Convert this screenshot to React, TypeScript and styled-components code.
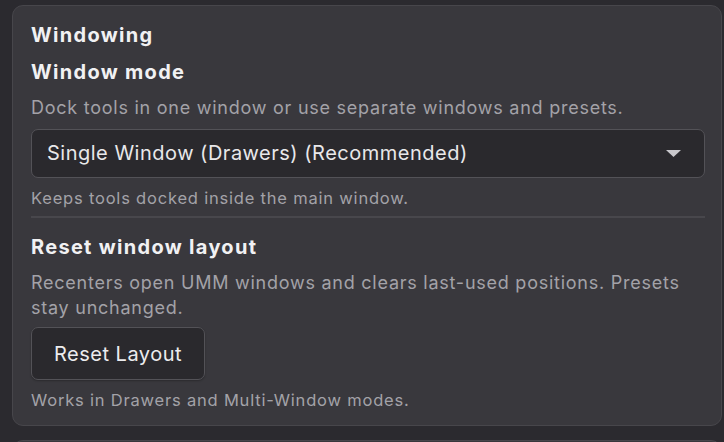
import React from "react";
import styled, { createGlobalStyle } from "styled-components";

const Global = createGlobalStyle`
  html, body {
    margin: 0;
    padding: 0;
    background: #2b2a2f;
    overflow: hidden;
  }
  body {
    font-family: Inter, "Noto Sans", "Liberation Sans", sans-serif;
    color: #ececee;
    -webkit-font-smoothing: antialiased;
  }
`;

const Page = styled.div`
  display: flex;
  flex-direction: column;
  gap: 14px;
  padding: 5px 2px 0 12px;
  height: 442px;
  box-sizing: border-box;
  overflow: hidden;
`;

const Card = styled.section`
  flex-shrink: 0;
  background: #39383d;
  border: 1px solid #47464b;
  border-radius: 11px;
  padding: 16px 16px 14px 18px;
  display: flex;
  flex-direction: column;
`;

const SectionTitle = styled.h2`
  margin: 0 0 11px;
  font-size: 20px;
  line-height: 26px;
  font-weight: 700;
  letter-spacing: 1.3px;
  color: #f1f1f3;
`;

const SettingTitle = styled.h3`
  margin: 0;
  font-size: 20px;
  line-height: 26px;
  font-weight: 700;
  letter-spacing: 1.3px;
  color: #f1f1f3;
`;

const Description = styled.p`
  margin: 10px 0 0;
  font-size: 18px;
  line-height: 25.7px;
  letter-spacing: 0.75px;
  color: #a3a2a8;
`;

const Hint = styled.p`
  margin: 9px 0 0;
  font-size: 16.5px;
  line-height: 22px;
  letter-spacing: 0.8px;
  color: #a3a2a8;
`;

const SelectBox = styled.div`
  margin-top: 8px;
  height: 49px;
  box-sizing: border-box;
  display: flex;
  align-items: center;
  justify-content: space-between;
  padding: 0 23px 0 15px;
  background: #2a292d;
  border: 1px solid #535257;
  border-radius: 7px;
  font-size: 20px;
  letter-spacing: 0.5px;
  color: #e8e8ea;
`;

const Caret = styled.svg`
  width: 15px;
  height: 7px;
  display: block;
`;

const Divider = styled.hr`
  margin: 7px 0 16px;
  border: none;
  height: 2px;
  background: #48474c;
`;

const Button = styled.button`
  margin-top: 6px;
  align-self: flex-start;
  height: 53px;
  box-sizing: border-box;
  padding: 0 22px;
  background: #2a292d;
  border: 1px solid #535257;
  border-radius: 7px;
  font-family: inherit;
  font-size: 20px;
  letter-spacing: 0.5px;
  color: #ececee;
  box-shadow: 0 1px 2px rgba(0, 0, 0, 0.25);
`;

const NextCard = styled(Card)`
  height: 40px;
  padding: 0;
`;

export default function App() {
  return (
    <>
      <Global />
      <Page>
        <Card>
          <SectionTitle>Windowing</SectionTitle>
          <SettingTitle>Window mode</SettingTitle>
          <Description>Dock tools in one window or use separate windows and presets.</Description>
          <SelectBox>
            <span>Single Window (Drawers) (Recommended)</span>
            <Caret viewBox="0 0 15 7">
              <path d="M0 0 H15 L7.5 7 Z" fill="#c9c8cc" />
            </Caret>
          </SelectBox>
          <Hint>Keeps tools docked inside the main window.</Hint>
          <Divider />
          <SettingTitle>Reset window layout</SettingTitle>
          <Description>
            Recenters open UMM windows and clears last-used positions. Presets stay unchanged.
          </Description>
          <Button>Reset Layout</Button>
          <Hint>Works in Drawers and Multi-Window modes.</Hint>
        </Card>
        <NextCard />
      </Page>
    </>
  );
}
